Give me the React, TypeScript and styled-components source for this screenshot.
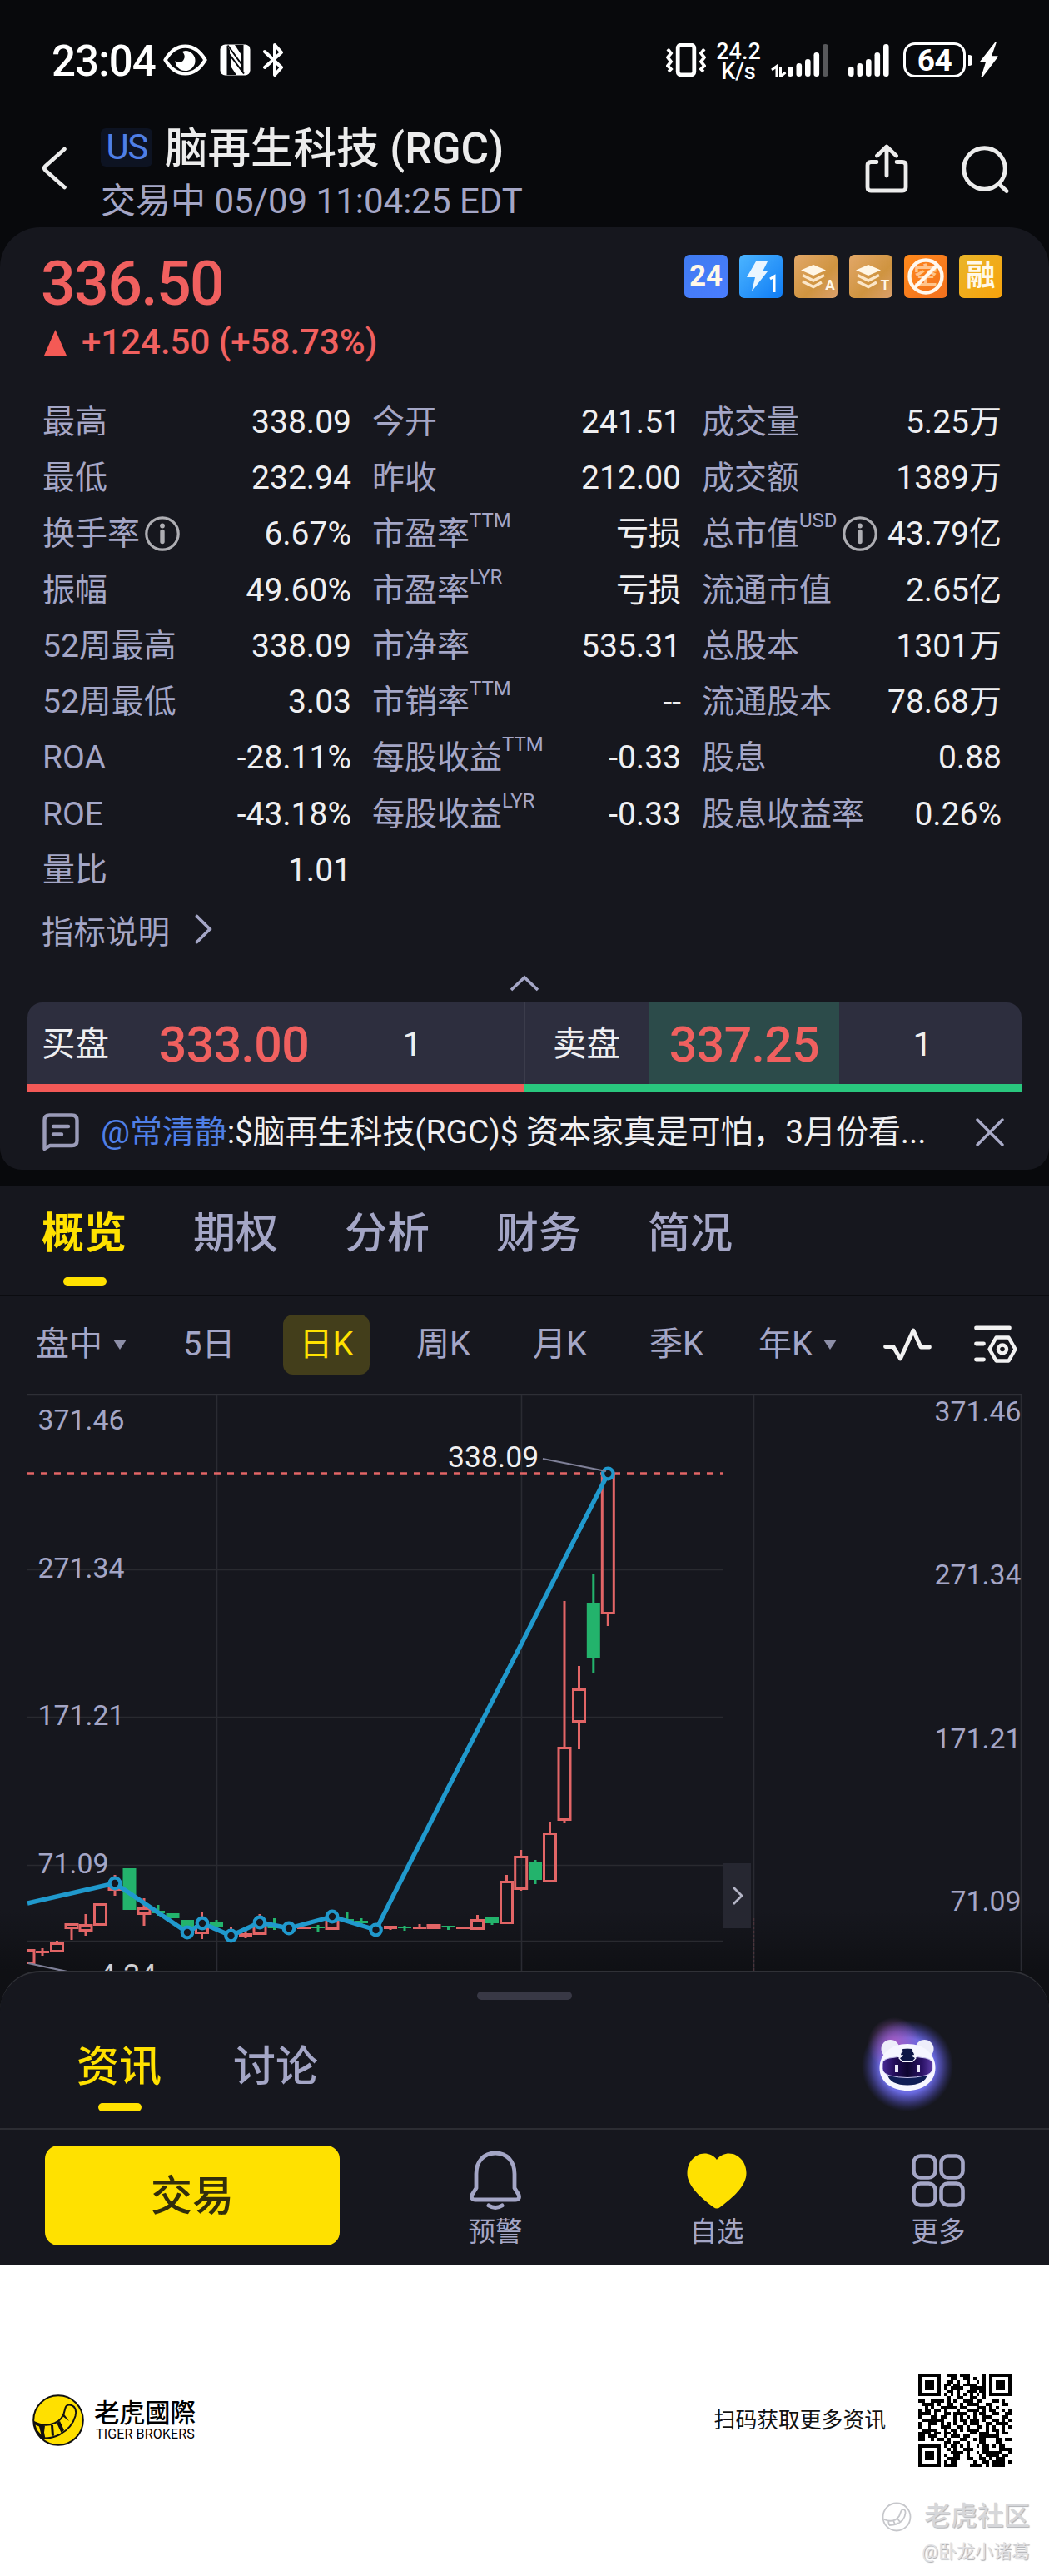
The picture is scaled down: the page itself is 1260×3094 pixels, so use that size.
import React from 'react';
import styled, { createGlobalStyle } from 'styled-components';

const FONT = `Roboto, 'Noto Sans CJK SC', sans-serif`;

const color = {
  page: '#08090c',
  panel: '#16171e',
  muted: '#a4a6c6',
  text: '#efeff1',
  red: '#f0605f',
  green: '#29c77e',
  yellow: '#ffe100',
  blue: '#4f7fe6',
  rule: '#2c2d33',
};

const GlobalStyle = createGlobalStyle`
  * { box-sizing: border-box; }
  body { margin: 0; background: #fff; font-family: ${FONT}; }
  svg { display: block; flex: none; }
  button { font: inherit; border: 0; padding: 0; margin: 0; background: none; color: inherit; }
`;

const Page = styled.div`
  width: 1260px;
  height: 3094px;
  background: #fff;
  overflow: hidden;
  white-space: nowrap;
`;

const Phone = styled.main`
  height: 2720px;
  background: ${color.page};
  display: flex;
  flex-direction: column;
`;

/* ---------- status bar ---------- */

const StatusBar = styled.div`
  height: 144px;
  flex: none;
  display: flex;
  align-items: center;
  padding: 0 60px 0 62px;
  color: #fff;
`;

const Clock = styled.span`
  width: 134px;
  font-size: 51px;
  line-height: 60px;
  font-weight: 500;
  letter-spacing: -0.9px;
  padding-top: 3px;
`;

const StatusLeft = styled.div`
  display: flex;
  align-items: center;
  gap: 15px;
  margin-right: auto;
`;

const StatusRight = styled.div`
  display: flex;
  align-items: center;
`;

const NetSpeed = styled.div`
  display: flex;
  flex-direction: column;
  width: 54px;
  margin: 3px 12px 0 12px;
  font-size: 27px;
  line-height: 24px;
  font-weight: 500;
  text-align: center;
`;

const Battery = styled.div`
  width: 75px;
  height: 42px;
  margin-left: 17px;
  border: 3px solid #fff;
  border-radius: 14px;
  font-size: 37px;
  line-height: 38px;
  font-weight: 700;
  letter-spacing: -0.6px;
  text-align: center;
`;

const BatteryTip = styled.i`
  width: 5px;
  height: 13px;
  margin: 0 8px 0 3px;
  border-radius: 0 4px 4px 0;
  background: #fff;
`;

const SignalGap = styled.i`
  width: 24px;
`;

/* ---------- title bar ---------- */

const TitleBar = styled.header`
  height: 129px;
  flex: none;
  display: flex;
  padding-left: 50px;
`;

const BackIcon = styled.div`
  width: 71px;
  padding-top: 32px;
`;

const Titles = styled.div`
  flex: 1;
`;

const TitleLine = styled.div`
  height: 66px;
  margin-top: 2px;
  display: flex;
  align-items: center;
  gap: 15px;
`;

const Market = styled.span`
  width: 62px;
  height: 46px;
  margin-top: -5px;
  border-radius: 6px;
  background: #0d1322;
  color: ${color.blue};
  font-size: 42px;
  line-height: 45px;
  letter-spacing: -1.5px;
  text-align: center;
`;

const Title = styled.h1`
  margin: 0;
  color: #ececec;
  font-size: 51.5px;
  line-height: 66px;
  font-weight: 500;
`;

const Session = styled.div`
  color: ${color.muted};
  font-size: 42px;
  line-height: 60px;
`;

const HeaderActions = styled.div`
  display: flex;
  gap: 63px;
  padding: 29px 48px 0 0;
`;

/* ---------- quote card ---------- */

const Card = styled.section`
  height: 1132px;
  flex: none;
  background: ${color.panel};
  border-radius: 48px 48px 26px 26px;
  padding-top: 22px;
`;

const PriceRow = styled.div`
  display: flex;
  justify-content: space-between;
  padding: 0 56px 0 49px;
  color: ${color.red};
`;

const Price = styled.div`
  padding-top: 1px;
  font-size: 73.5px;
  line-height: 90px;
  font-weight: 500;
  letter-spacing: -1.7px;
`;

const Change = styled.div`
  display: flex;
  align-items: center;
  gap: 18px;
  padding-left: 4px;
  font-size: 42px;
  line-height: 50px;
  font-weight: 500;
`;

const Badges = styled.div`
  display: flex;
  gap: 14px;
  margin-top: 11px;
`;

const Badge = styled.span<{ $bg: string }>`
  width: 52px;
  height: 52px;
  border-radius: 6px;
  background: ${(p) => p.$bg};
  display: flex;
  align-items: center;
  justify-content: center;
  color: #fff8e8;
  font-size: 35px;
  font-weight: 700;
  line-height: 52px;
`;

const Stats = styled.div`
  display: grid;
  grid-template-columns: 371px 371px 360px;
  column-gap: 25px;
  margin: 37px 0 0 51px;
`;

const StatRow = styled.div`
  height: 67.3px;
  display: flex;
  align-items: center;
  justify-content: space-between;
  font-size: 39px;
  line-height: 60px;
`;

const StatLabel = styled.span`
  display: flex;
  align-items: center;
  color: ${color.muted};
`;

const Sup = styled.span`
  font-size: 24px;
  line-height: 30px;
  margin-top: -32px;
`;

const InfoSlot = styled.span`
  margin-left: 6px;
`;

const StatValue = styled.span`
  color: ${color.text};
`;

const Explain = styled.div`
  height: 75px;
  padding-left: 50px;
  display: flex;
  align-items: center;
  gap: 30px;
  color: ${color.muted};
  font-size: 38.5px;
`;

const Collapse = styled.div`
  height: 50px;
  padding-top: 4px;
  display: flex;
  align-items: center;
  justify-content: center;
`;

const BidAsk = styled.div`
  display: grid;
  grid-template-columns: 1fr 1fr;
  margin: 0 33px;
  border-radius: 18px 18px 0 0;
  overflow: hidden;
  background: #2d2e3e;
`;

const Side = styled.div<{ $bar: string }>`
  height: 108px;
  display: flex;
  border-bottom: 10px solid ${(p) => p.$bar};
  line-height: 101px;
  color: ${color.text};
  & + & { box-shadow: inset 1px 0 #3b3c4b; }
`;

const SideName = styled.span<{ $indent: number; $width: number }>`
  width: ${(p) => p.$width}px;
  padding-left: ${(p) => p.$indent}px;
  font-size: 40.5px;
`;

const SidePrice = styled.span<{ $bg?: string }>`
  width: 228px;
  font-size: 59px;
  font-weight: 500;
  letter-spacing: -0.6px;
  text-align: center;
  color: ${color.red};
  background: ${(p) => p.$bg ?? 'transparent'};
`;

const SideSize = styled.span`
  width: 200px;
  text-align: center;
  font-size: 41px;
`;

const Comment = styled.div`
  height: 93px;
  display: flex;
  align-items: center;
  padding: 4px 54px 0 51px;
  font-size: 39px;
  line-height: 60px;
  color: ${color.text};
`;

const CommentText = styled.div`
  flex: 1;
  margin-left: 26px;
  letter-spacing: -0.1px;
`;

const Mention = styled.span`
  color: ${color.blue};
`;

/* ---------- tabs ---------- */

const TabBar = styled.nav`
  height: 132px;
  flex: none;
  margin-top: 20px;
  padding: 21px 0 0 50px;
  display: flex;
  gap: 79px;
  background: ${color.panel};
  border-bottom: 2px solid #0b0c10;
`;

const Tab = styled.div<{ $active?: boolean; $weight: number }>`
  width: 103px;
  font-size: 51px;
  line-height: 72px;
  font-weight: ${(p) => p.$weight};
  color: ${(p) => (p.$active ? color.yellow : color.muted)};
`;

const Underline = styled.i<{ $top: number }>`
  display: block;
  width: 52px;
  height: 10px;
  margin: ${(p) => p.$top}px auto 0;
  border-radius: 5px;
  background: ${color.yellow};
`;

const Periods = styled.div`
  height: 117px;
  flex: none;
  padding: 0 0 1px 43px;
  display: grid;
  grid-template-columns: 177px 120px 160px 140px 140px 131px 150px 109px 60px;
  align-items: center;
  background: ${color.panel};
  color: ${color.muted};
  font-size: 40px;
  line-height: 72px;
`;

const Period = styled.span`
  display: flex;
  align-items: center;
  gap: 13px;
`;

const ActivePeriod = styled.span`
  width: 104px;
  height: 72px;
  border-radius: 12px;
  background: #433e1b;
  color: ${color.yellow};
  text-align: center;
`;

const Caret = styled.i`
  border: 8.5px solid transparent;
  border-top: 12px solid #8d8fa8;
  border-bottom: 0;
`;

/* ---------- chart ---------- */

const ChartArea = styled.div`
  position: relative;
  height: 693px;
  flex: none;
  background: linear-gradient(${color.panel} 620px, #0f1014 693px);
`;

const ChartToggle = styled.button`
  position: absolute;
  left: 869px;
  top: 564px;
  width: 33px;
  height: 78px;
  display: flex;
  align-items: center;
  justify-content: center;
  background: #262731;
`;

/* ---------- bottom sheet ---------- */

const SheetBackdrop = styled.div`
  height: 189px;
  flex: none;
  background: #0f1014;
`;

const Sheet = styled.section`
  height: 189px;
  background: ${color.panel};
  border-top: 2px solid #303137;
  border-radius: 48px 48px 0 0;
  padding-top: 23px;
`;

const Handle = styled.i`
  display: block;
  width: 114px;
  height: 10px;
  margin: 0 auto;
  border-radius: 5px;
  background: #383845;
`;

const SheetTabs = styled.div`
  display: flex;
  gap: 85px;
  padding: 45px 100px 0 92px;
`;

const Assistant = styled.div`
  margin: -36px 0 0 auto;
  height: 140px;
`;

const BottomBar = styled.footer`
  height: 164px;
  flex: none;
  display: flex;
  background: ${color.panel};
  border-top: 2px solid ${color.rule};
  padding: 19px 0 0 54px;
`;

const TradeButton = styled.button`
  width: 354px;
  height: 120px;
  margin-right: 54px;
  border-radius: 16px;
  background: ${color.yellow};
  color: #322e0c;
  font-size: 50px;
  line-height: 122px;
  font-weight: 500;
`;

const BarItem = styled.div`
  width: 266px;
  display: flex;
  flex-direction: column;
  align-items: center;
  color: ${color.muted};
  font-size: 32.5px;
  line-height: 40px;
`;

const BarIcon = styled.div`
  height: 84px;
  display: flex;
  align-items: center;
`;

/* ---------- share footer ---------- */

const ShareFooter = styled.div`
  height: 374px;
  display: flex;
  flex-direction: column;
`;

const BrandRow = styled.div`
  display: flex;
  align-items: center;
  padding: 131px 45px 0 39px;
`;

const BrandText = styled.div`
  margin-left: 12px;
  color: #000;
`;

const BrandName = styled.div`
  font-family: 'Noto Sans CJK TC', sans-serif;
  font-size: 30.5px;
  line-height: 36px;
  font-weight: 500;
  margin-top: -3px;
`;

const BrandLatin = styled.div`
  font-size: 16px;
  line-height: 18px;
  letter-spacing: 0.15px;
  padding-left: 2px;
  margin-top: 1px;
`;

const ScanHint = styled.div`
  margin: 0 39px 0 auto;
  font-size: 25.8px;
  line-height: 40px;
  color: #111;
`;

const Watermark = styled.div`
  display: flex;
  flex-direction: column;
  align-items: flex-end;
  padding: 38px 23px 0 0;
`;

const WatermarkTop = styled.div`
  display: flex;
  align-items: center;
  gap: 15px;
  color: #d6d7da;
  text-shadow: 1px 1px 1px #b0b2b6;
  font-size: 31.7px;
  line-height: 44px;
  font-weight: 500;
`;

const WatermarkUser = styled.div`
  font-size: 22px;
  line-height: 40px;
  color: #e2e2e5;
  text-shadow: 1px 1px 1px #a9abaf;
`;

/* ---------- icons ---------- */

const EyeIcon = () => (
  <svg width="53" height="38" viewBox="0 0 53 38">
    <path d="M2.5 19C9 8 17 2.6 26.500 2.600S44 8 50.500 19C44 30 36 35.400 26.500 35.400S9 30 2.500 19Z" fill="none" stroke="#fff" strokeWidth="4.400" strokeLinejoin="round" />
    <path d="M27 8a12 12 0 1 1-12.500 12c2.500 2.500 7.500 2.500 9.800-.8C27 15.500 25.500 11 22.500 9.200A12 12 0 0 1 27 8Z" fill="#fff" />
  </svg>
);

const NfcIcon = () => (
  <svg width="37" height="38" viewBox="0 0 37 38">
    <rect x="0.500" y="0.500" width="36" height="37" rx="6" fill="#fff" />
    <path d="M9.500 1.500 26 24V9M12 36V13l17 22.500" fill="none" stroke="#08090c" strokeWidth="2" />
    <path d="M8.500 1.500 12 7v30H8.500ZM28.500 36.500 26 31V1h2.500Z" fill="#08090c" />
    <path d="M12 25l8 12h-8Z" fill="#08090c" />
    <path d="M26 13 18 1h8Z" fill="#08090c" />
  </svg>
);

const BluetoothIcon = () => (
  <svg width="26" height="40" viewBox="0 0 26 40">
    <path d="M2 10 22 29 14 38V2l8 9L2 29" fill="none" stroke="#fff" strokeWidth="4" strokeLinejoin="round" strokeLinecap="round" />
  </svg>
);

const VibrateIcon = () => (
  <svg width="48" height="40" viewBox="0 0 48 40">
    <rect x="14.200" y="2.200" width="19.600" height="35.600" rx="3.500" fill="none" stroke="#fff" strokeWidth="4.800" />
    <path d="M2 7l4 5-4 5 4 5-4 5 4 4-3 3M46 7l-4 5 4 5-4 5 4 5-4 4 3 3" fill="none" stroke="#fff" strokeWidth="3.800" />
  </svg>
);

const SIGNAL_TOPS = [28, 24, 19, 11, 1];

const Signal = ({ dimLast }: { dimLast?: boolean }) => (
  <svg width="49" height="41" viewBox="0 0 49 41">
    {SIGNAL_TOPS.map((top, i) => (
      <rect key={top} x={i * 10.5} y={top} width="6.600" height={40 - top} rx="3.200" fill={dimLast && i === 4 ? '#57585b' : '#fff'} />
    ))}
  </svg>
);

const DataArrows = () => (
  <svg width="20" height="41" viewBox="0 0 20 41">
    <path d="M1 32 7 27.500V40M11.500 28v12l6-5" fill="none" stroke="#fff" strokeWidth="3" />
  </svg>
);

const BoltIcon = () => (
  <svg width="24" height="42" viewBox="0 0 24 42">
    <path d="M20 0 2 23h7L3 42 22 17h-8Z" fill="#fff" stroke="#fff" strokeWidth="1.500" strokeLinejoin="round" />
  </svg>
);

const BackArrow = () => (
  <svg width="32" height="52" viewBox="0 0 32 52">
    <path d="M27.500 3 4.500 23.500q-2.500 2.500 0 5L27.500 49" fill="none" stroke="#ececec" strokeWidth="4.600" strokeLinecap="round" />
  </svg>
);

const ShareIcon = () => (
  <svg width="52" height="60" viewBox="0 0 52 60">
    <path d="M14 21.500H7q-4 0-4 4V52q0 4 4 4h38q4 0 4-4V25.500q0-4-4-4h-7M26 38V4M14.500 14 26 3l11.500 11" fill="none" stroke="#ececec" strokeWidth="4.800" strokeLinecap="round" strokeLinejoin="round" />
  </svg>
);

const SearchIcon = () => (
  <svg width="58" height="60" viewBox="0 0 58 60">
    <circle cx="28.500" cy="29.500" r="24.800" fill="none" stroke="#ececec" strokeWidth="5" />
    <path d="M46 48l9 8.500" stroke="#ececec" strokeWidth="5" strokeLinecap="round" />
  </svg>
);

const FlashBadge = () => (
  <svg width="52" height="52" viewBox="0 0 52 52">
    <path d="M20 8h14l-6 12h6L15 44l4-17H9Z" fill="#eaf6ff" />
    <path d="M37 29l5-3v19" fill="none" stroke="#fff" strokeWidth="3" />
  </svg>
);

const LayersBadge = ({ letter }: { letter: string }) => (
  <svg width="52" height="52" viewBox="0 0 52 52">
    <path d="M23 12l15 6.500L23 25 8 18.500Z" fill="#fff6e6" />
    <path d="M10 24.500 23 31l13-6.500M10 32l13 6.500L33 33" fill="none" stroke="#fbe6c8" strokeWidth="3.600" />
    <text x="43" y="42" fontSize="17" fontWeight="700" textAnchor="middle" fill="#fff6e6">{letter}</text>
  </svg>
);

const NoShortBadge = () => (
  <svg width="52" height="52" viewBox="0 0 52 52">
    <text x="26" y="36" fontSize="29" fontWeight="700" textAnchor="middle" fill="#ffc48c">空</text>
    <circle cx="26" cy="26" r="19.500" fill="none" stroke="#fff8ee" strokeWidth="4.400" />
    <path d="M12.500 39.500 39.500 12.500" stroke="#fff8ee" strokeWidth="4.400" />
  </svg>
);

const InfoIcon = () => (
  <svg width="42" height="42" viewBox="0 0 42 42">
    <circle cx="21" cy="21" r="19.200" fill="none" stroke="#aeaeb3" strokeWidth="3.200" />
    <circle cx="21" cy="11.500" r="2.900" fill="#aeaeb3" />
    <path d="M21 18.500v12" stroke="#aeaeb3" strokeWidth="5.400" strokeLinecap="round" />
  </svg>
);

const CommentIcon = () => (
  <svg width="44" height="46" viewBox="0 0 44 46">
    <path d="M2.500 43V8.500q0-6 6-6h27q6 0 6 6V33q0 6-6 6H9ZM13 16h18M13 25.500h10" fill="none" stroke="#9a9bb8" strokeWidth="4.400" strokeLinecap="round" strokeLinejoin="round" />
  </svg>
);

const CloseIcon = () => (
  <svg width="34" height="34" viewBox="0 0 34 34">
    <path d="M2 2l30 30M32 2 2 32" stroke="#a9abc8" strokeWidth="3.400" strokeLinecap="round" />
  </svg>
);

const PulseIcon = () => (
  <svg width="58" height="42" viewBox="0 0 58 42">
    <path d="M2.500 23.500H12L20.500 38 36 4l9 20h10.500" fill="none" stroke="#f2f2f2" strokeWidth="4.800" strokeLinecap="round" strokeLinejoin="round" />
  </svg>
);

const ChartSettingsIcon = () => (
  <svg width="52" height="48" viewBox="0 0 52 48">
    <path d="M2.500 4h40M2.500 23h9M2.500 42h9" fill="none" stroke="#f2f2f2" strokeWidth="4.800" strokeLinecap="round" />
    <path d="M26.500 15.500h15l8 14-8 14h-15l-8-14Z" fill="none" stroke="#f2f2f2" strokeWidth="4.400" strokeLinejoin="round" />
    <circle cx="34" cy="29.500" r="5" fill="none" stroke="#f2f2f2" strokeWidth="4.400" />
  </svg>
);

const AssistantIcon = () => (
  <svg width="140" height="140" viewBox="0 0 140 140">
    <defs>
      <radialGradient id="aura">
        <stop offset="0.600" stopColor="#6a6ae0" />
        <stop offset="0.760" stopColor="#5552bd" stopOpacity="0.700" />
        <stop offset="1" stopColor="#3a3a90" stopOpacity="0" />
      </radialGradient>
      <radialGradient id="auraPink">
        <stop offset="0" stopColor="#a85cc4" />
        <stop offset="1" stopColor="#a85cc4" stopOpacity="0" />
      </radialGradient>
      <linearGradient id="visor">
        <stop offset="0" stopColor="#472a94" />
        <stop offset="0.250" stopColor="#220c58" />
        <stop offset="0.500" stopColor="#0d0530" />
        <stop offset="0.800" stopColor="#2c1368" />
        <stop offset="1" stopColor="#5a3aa4" />
      </linearGradient>
    </defs>
    <circle cx="70" cy="70" r="55" fill="url(#aura)" />
    <circle cx="54" cy="44" r="32" fill="url(#auraPink)" />
    <circle cx="49.500" cy="50" r="11" fill="#eeeefa" />
    <circle cx="90.500" cy="50" r="11" fill="#eeeefa" />
    <path d="M70 44c20 0 33.500 12 33.500 29S88 100 70 100 36.500 90 36.500 73 50 44 70 44Z" fill="#f6f6ff" />
    <path d="M46 80h48c-1 9-11 13.500-24 13.500S47 89 46 80Z" fill="#101d55" />
    <path d="M40 68q0-5 8-7 22-4 44 0 8 2 8 7v6q-1 6-9 8-21 5-42 0-8-2-9-8Z" fill="url(#visor)" stroke="#c9c4ee" strokeWidth="1" />
    <path d="M60 61l4 4.500h12l4-4.500-4-12H64Z" fill="#0d1646" stroke="#f6f6ff" strokeWidth="1.200" />
    <path d="M56 51l9 1.500-3 1.500ZM84 51l-9 1.500 3 1.500ZM55 57l10 1-4 2.500ZM85 57l-10 1 4 2.500ZM58 47h24l-6 2.500q-6-1.500-12 0Z" fill="#f6f6ff" stroke="#f6f6ff" strokeWidth="1" />
    <path d="M57 69v9M83 69v9" stroke="#e9e7f7" strokeWidth="4" />
  </svg>
);

const BellIcon = () => (
  <svg width="64" height="72" viewBox="0 0 64 72">
    <path d="M32 3C18 3 9 13 9 28v17L4 53q-2 6 4 6h48q6 0 4-6l-5-8V28C55 13 46 3 32 3Z" fill="none" stroke={color.muted} strokeWidth="4.800" strokeLinejoin="round" />
    <path d="M24 66q8 5 16 0" fill="none" stroke={color.muted} strokeWidth="5" strokeLinecap="round" />
  </svg>
);

const HeartIcon = () => (
  <svg width="72" height="67" viewBox="0 0 72 67">
    <path d="M36 8C42 0 52-1 59 2.500 69 7.500 73 19 71 29 68 43 52 56 40 65q-4 3-8 0C20 56 4 43 1 29-1 19 3 7.500 13 2.500 20-1 30 0 36 8Z" fill={color.yellow} />
  </svg>
);

const MoreIcon = () => (
  <svg width="64" height="64" viewBox="0 0 64 64">
    {[2.5, 35.5].map((x) =>
      [2.5, 35.5].map((y) => (
        <rect key={`${x}-${y}`} x={x} y={y} width="26" height="26" rx="8" fill="none" stroke={color.muted} strokeWidth="4.600" />
      )),
    )}
  </svg>
);

const TigerLogo = () => (
  <svg width="62" height="62" viewBox="0 0 62 62">
    <circle cx="31" cy="31" r="29.800" fill="#ffe000" stroke="#111" strokeWidth="2" />
    <path d="M1.500 33c8 4 17 5 25 1.500C35 31 38 24 39 18c1-6 5-6 8-5 5 2 6 7 4.500 13C49 35 42 43 33 48c-8 4-15 5-22 4.500" fill="none" stroke="#111" strokeWidth="2" />
    <path d="M1 32l8 4 6 1.500-1 8 1.500 7.500-5-.5C6 48 2 41 1 32Z" fill="#111" />
    <path d="M8.500 38l2 11L6 44 4 36.500ZM22 37l3 0 1 12.500-3 .5ZM29 34l4-2 5 11-3.500 3ZM36 26l1.500-3 6.500 9Z" fill="#111" />
    <path d="M8 38.500l2.500 10-5-6-2-6Z" fill="#ffe000" />
  </svg>
);

const QR_ROWS = [
  '#######..###.###....#.#######',
  '#.....#...##..##.#..#.#.....#',
  '#.###.#..##.#..#..#.#.#.###.#',
  '#.###.#.##.##.####..#.#.###.#',
  '#.###.#.#.####..#####.#.###.#',
  '#.....#..##.#..###.##.#.....#',
  '#######.#.#.#.#.#.#.#.#######',
  '.........#..##..##..#........',
  '##..####.#.#..###.##...##.#..',
  '.####.#..##..#.####..##...##.',
  '..#.#..#####.##...###.#.#....',
  '#.##.##.#...#..####.#.##..#.#',
  '####.#..##.####..#.##..##..##',
  '#...##.##..#.#.#.#..###...##.',
  '.#######...#.##.###.#..##.#.#',
  '#..###.#.#.#..#.###..##.####.',
  '#..#...###..##.#..##.#.#..#.#',
  '.#####..#.##.#.####..#.##.#..',
  '####.##.##.#....##.###..#.##.',
  '##.###..#.###.##...######....',
  '##..#.##.#...##..#.##...##.##',
  '........##.##..#...##...##...',
  '#######.#.##.#.#..#.##.#.##..',
  '#.....#..#.#..###...##...####',
  '#.###.#...####.#..#.######..#',
  '#.###.#.#..##..#...#.####.##.',
  '#.###.#..####..##..##.#.###..',
  '#.....#.#.##.....#..##.####.#',
  '#######.####....####.#.####..',
];

const QrCode = () => (
  <svg width="112" height="112" viewBox="0 0 29 29" shapeRendering="crispEdges">
    {QR_ROWS.map((row, y) =>
      row.split('').map((cell, x) => (cell === '#' ? <rect key={`${x}-${y}`} x={x} y={y} width="1" height="1" fill="#000" /> : null)),
    )}
  </svg>
);

const WatermarkLogo = () => (
  <svg width="36" height="36" viewBox="0 0 36 36">
    <circle cx="18" cy="18" r="16.500" fill="none" stroke="#c6c7cb" strokeWidth="1.800" />
    <path d="M3 21q12 5 18-4c2-4 2-8 5-8 4 0 3 8-1 13-4 4-9 6-16 6M8 23l1 5M14 22l2 5M19 20l3 4" fill="none" stroke="#c6c7cb" strokeWidth="1.800" />
  </svg>
);

/* ---------- data ---------- */

interface Stat {
  label: string;
  value: string;
  sup?: string;
  info?: boolean;
}

const STATS: Stat[][] = [
  [
    { label: '最高', value: '338.09' },
    { label: '最低', value: '232.94' },
    { label: '换手率', value: '6.67%', info: true },
    { label: '振幅', value: '49.60%' },
    { label: '52周最高', value: '338.09' },
    { label: '52周最低', value: '3.03' },
    { label: 'ROA', value: '-28.11%' },
    { label: 'ROE', value: '-43.18%' },
    { label: '量比', value: '1.01' },
  ],
  [
    { label: '今开', value: '241.51' },
    { label: '昨收', value: '212.00' },
    { label: '市盈率', sup: 'TTM', value: '亏损' },
    { label: '市盈率', sup: 'LYR', value: '亏损' },
    { label: '市净率', value: '535.31' },
    { label: '市销率', sup: 'TTM', value: '--' },
    { label: '每股收益', sup: 'TTM', value: '-0.33' },
    { label: '每股收益', sup: 'LYR', value: '-0.33' },
  ],
  [
    { label: '成交量', value: '5.25万' },
    { label: '成交额', value: '1389万' },
    { label: '总市值', sup: 'USD', value: '43.79亿', info: true },
    { label: '流通市值', value: '2.65亿' },
    { label: '总股本', value: '1301万' },
    { label: '流通股本', value: '78.68万' },
    { label: '股息', value: '0.88' },
    { label: '股息收益率', value: '0.26%' },
  ],
];

/* x, body top, body bottom, wick top, wick bottom, rising */
type Candle = [number, number, number, number, number, boolean];

const CANDLES: Candle[] = [
  [34, 2341, 2359, 2341, 2359, true],
  [51, 2343, 2346, 2340, 2349, true],
  [68.5, 2333, 2345, 2331, 2345, true],
  [86, 2310, 2317, 2310, 2330, true],
  [103, 2311, 2320, 2299, 2325, true],
  [120.5, 2286, 2313, 2286, 2313, true],
  [138, 2264, 2271, 2252, 2277, true],
  [155.5, 2244, 2294, 2244, 2294, false],
  [173, 2291, 2300, 2280, 2313, true],
  [190, 2295, 2298, 2288, 2301, false],
  [207.5, 2298, 2304, 2298, 2304, false],
  [225, 2306, 2314, 2306, 2314, false],
  [242.5, 2312, 2323, 2296, 2329, true],
  [260, 2308, 2314, 2306, 2314, false],
  [277.5, 2321, 2324, 2315, 2325, true],
  [295, 2322, 2326, 2319, 2328, true],
  [312, 2311, 2324, 2299, 2324, true],
  [329.5, 2313, 2316, 2304, 2318, false],
  [347, 2314, 2318, 2312, 2319, false],
  [365, 2314, 2317, 2314, 2317, true],
  [382, 2314, 2316, 2312, 2321, false],
  [399, 2306, 2318, 2300, 2318, true],
  [417, 2305, 2307, 2297, 2308, false],
  [434, 2307, 2310, 2304, 2311, false],
  [469, 2313, 2317, 2313, 2318, true],
  [486, 2314, 2316, 2313, 2319, false],
  [504, 2314, 2317, 2311, 2317, true],
  [521, 2311, 2317, 2311, 2317, true],
  [538.5, 2313, 2315, 2313, 2318, false],
  [556, 2314, 2317, 2314, 2317, true],
  [573.5, 2305, 2318, 2300, 2318, true],
  [591, 2303, 2310, 2303, 2312, false],
  [608.5, 2259, 2311, 2252, 2311, true],
  [625.7, 2229, 2270, 2222, 2271, true],
  [643, 2236, 2258, 2234, 2263, false],
  [660.5, 2201, 2261, 2188, 2261, true],
  [678, 2098, 2187, 1923, 2190, true],
  [695.5, 2028, 2069, 2001, 2101, true],
  [712.8, 1925, 1991, 1890, 2010, false],
  [730.3, 1770, 1939, 1770, 1953, true],
];

const TREND: [number, number][] = [
  [33, 2286], [138, 2262], [225, 2321], [243, 2310], [277.5, 2325],
  [312, 2309], [347, 2316], [399, 2302], [451.5, 2318], [730.3, 1770],
];

const CHART_RED = '#e26566';
const CHART_GREEN = '#23b36c';

const LEFT_AXIS: [string, number][] = [['371.46', 1705], ['271.34', 1883], ['171.21', 2060], ['71.09', 2238]];
const RIGHT_AXIS: [string, number][] = [['371.46', 1695], ['271.34', 1891], ['171.21', 2087.5], ['71.09', 2283]];

const CandleMark = ({ candle: [x, top, bottom, high, low, rising] }: { candle: Candle }) => {
  const ink = rising ? CHART_RED : CHART_GREEN;
  const hollow = rising && bottom - top > 5;
  return (
    <g stroke={ink} strokeWidth="3">
      {high < top && <path d={`M${x} ${high}V${top}`} />}
      {low > bottom && <path d={`M${x} ${bottom}V${low}`} />}
      {hollow ? (
        <rect x={x - 7} y={top + 1.5} width="14" height={bottom - top - 3} fill="none" />
      ) : (
        <rect x={x - 8} y={top} width="16" height={bottom - top} fill={ink} stroke="none" />
      )}
    </g>
  );
};

const PriceChart = () => (
  <svg width="1260" height="693" viewBox="0 1674 1260 693" fontFamily={FONT}>
    <defs>
      <clipPath id="plot"><rect x="33" y="1674" width="840" height="693" /></clipPath>
    </defs>
    <path d="M33 1675H1227" stroke="#2e2f36" strokeWidth="2.400" />
    <path d="M260.500 1675V2367M626.500 1675V2367M905.500 1675V2367M1226.500 1675V2367" stroke="#2a2b32" strokeWidth="1.600" />
    <path d="M33 1885.500H869M33 2062.500H869M33 2240.500H869M33 2331.500H869" stroke="#292a30" strokeWidth="1.600" />
    <path d="M905.500 2304V2367" stroke="#4a343b" strokeWidth="1.400" strokeDasharray="3 2" />
    <g clipPath="url(#plot)">
      <path d="M33 1770H869" stroke={CHART_RED} strokeWidth="3.400" strokeDasharray="8 8" />
      {CANDLES.map((c) => <CandleMark key={c[0]} candle={c} />)}
      <polyline points={TREND.map((p) => p.join(',')).join(' ')} fill="none" stroke="#2099cd" strokeWidth="5.400" strokeLinejoin="round" />
      {TREND.slice(1).map(([x, y]) => (
        <circle key={x} cx={x} cy={y} r="6.300" fill={color.panel} stroke="#2099cd" strokeWidth="4.200" />
      ))}
      <path d="M652 1752 728 1767M34 2358 90 2370" stroke="#7f8098" strokeWidth="2.200" />
    </g>
    <g fill={color.muted} fontSize="33.800">
      {LEFT_AXIS.map(([t, y]) => <text key={t} x="45.500" y={y + 12.2}>{t}</text>)}
      {RIGHT_AXIS.map(([t, y]) => <text key={t} x="1226.500" y={y + 12.2} textAnchor="end">{t}</text>)}
    </g>
    <g fill={color.text} fontSize="35.500">
      <text x="538" y="1761.500">338.09</text>
      <text x="119" y="2384" fill="#cfcfd2">4.24</text>
    </g>
  </svg>
);

const TABS = ['概览', '期权', '分析', '财务', '简况'];

export default function App() {
  return (
    <Page>
      <GlobalStyle />
      <Phone>
        <StatusBar>
          <Clock>23:04</Clock>
          <StatusLeft>
            <EyeIcon />
            <NfcIcon />
            <BluetoothIcon />
          </StatusLeft>
          <StatusRight>
            <VibrateIcon />
            <NetSpeed><span>24.2</span><span>K/s</span></NetSpeed>
            <DataArrows />
            <Signal dimLast />
            <SignalGap />
            <Signal />
            <Battery>64</Battery>
            <BatteryTip />
            <BoltIcon />
          </StatusRight>
        </StatusBar>

        <TitleBar>
          <BackIcon><BackArrow /></BackIcon>
          <Titles>
            <TitleLine>
              <Market>US</Market>
              <Title>脑再生科技 (RGC)</Title>
            </TitleLine>
            <Session>交易中 05/09 11:04:25 EDT</Session>
          </Titles>
          <HeaderActions>
            <ShareIcon />
            <SearchIcon />
          </HeaderActions>
        </TitleBar>

        <Card>
          <PriceRow>
            <div>
              <Price>336.50</Price>
              <Change>
                <svg width="27" height="31" viewBox="0 0 27 31"><path d="M13.500 0 27 31H0Z" fill="#f45a55" /></svg>
                +124.50 (+58.73%)
              </Change>
            </div>
            <Badges>
              <Badge $bg="linear-gradient(150deg,#3f7bf0,#4a7dff)">24</Badge>
              <Badge $bg="linear-gradient(135deg,#4bb4ff,#0f7cf5)"><FlashBadge /></Badge>
              <Badge $bg="linear-gradient(135deg,#e2a768,#cf9440 60%,#dba06c)"><LayersBadge letter="A" /></Badge>
              <Badge $bg="linear-gradient(135deg,#e2a768,#cf9440 60%,#dba06c)"><LayersBadge letter="T" /></Badge>
              <Badge $bg="linear-gradient(135deg,#ff8a1c,#f2701e)"><NoShortBadge /></Badge>
              <Badge $bg="linear-gradient(135deg,#e9b52a,#f8a30c)">融</Badge>
            </Badges>
          </PriceRow>

          <Stats>
            {STATS.map((column, i) => (
              <div key={i}>
                {column.map((s) => (
                  <StatRow key={s.label + (s.sup ?? '')}>
                    <StatLabel>
                      {s.label}
                      {s.sup && <Sup>{s.sup}</Sup>}
                      {s.info && <InfoSlot><InfoIcon /></InfoSlot>}
                    </StatLabel>
                    <StatValue>{s.value}</StatValue>
                  </StatRow>
                ))}
              </div>
            ))}
          </Stats>

          <Explain>
            指标说明
            <svg width="22" height="36" viewBox="0 0 22 36"><path d="M2.500 2.500 18 18 2.500 33.500" fill="none" stroke={color.muted} strokeWidth="3.800" strokeLinecap="round" /></svg>
          </Explain>
          <Collapse>
            <svg width="36" height="20" viewBox="0 0 36 20"><path d="M2 18 18 3l16 15" fill="none" stroke={color.muted} strokeWidth="3.600" /></svg>
          </Collapse>

          <BidAsk>
            <Side $bar="#f35957">
              <SideName $indent={17} $width={134}>买盘</SideName>
              <SidePrice>333.00</SidePrice>
              <SideSize>1</SideSize>
            </Side>
            <Side $bar={color.green}>
              <SideName $indent={34} $width={150}>卖盘</SideName>
              <SidePrice $bg="#2c4b4a">337.25</SidePrice>
              <SideSize>1</SideSize>
            </Side>
          </BidAsk>

          <Comment>
            <CommentIcon />
            <CommentText><Mention>@常清静</Mention>:$脑再生科技(RGC)$ 资本家真是可怕，3月份看...</CommentText>
            <CloseIcon />
          </Comment>
        </Card>

        <TabBar>
          {TABS.map((name, i) => (
            <Tab key={name} $active={i === 0} $weight={i === 0 ? 700 : 500}>
              {name}
              {i === 0 && <Underline $top={16} />}
            </Tab>
          ))}
        </TabBar>

        <Periods>
          <Period>盘中<Caret /></Period>
          <Period>5日</Period>
          <ActivePeriod>日K</ActivePeriod>
          <Period>周K</Period>
          <Period>月K</Period>
          <Period>季K</Period>
          <Period>年K<Caret /></Period>
          <PulseIcon />
          <ChartSettingsIcon />
        </Periods>

        <ChartArea>
          <PriceChart />
          <ChartToggle>
            <svg width="14" height="24" viewBox="0 0 14 24"><path d="M2 2l10 10L2 22" fill="none" stroke="#b4b5c6" strokeWidth="2.800" /></svg>
          </ChartToggle>
        </ChartArea>

        <SheetBackdrop>
          <Sheet>
            <Handle />
            <SheetTabs>
              <Tab $active $weight={500}>资讯<Underline $top={7} /></Tab>
              <Tab $weight={500}>讨论</Tab>
              <Assistant><AssistantIcon /></Assistant>
            </SheetTabs>
          </Sheet>
        </SheetBackdrop>

        <BottomBar>
          <TradeButton>交易</TradeButton>
          <BarItem><BarIcon><BellIcon /></BarIcon>预警</BarItem>
          <BarItem><BarIcon><HeartIcon /></BarIcon>自选</BarItem>
          <BarItem><BarIcon><MoreIcon /></BarIcon>更多</BarItem>
        </BottomBar>
      </Phone>

      <ShareFooter>
        <BrandRow>
          <TigerLogo />
          <BrandText>
            <BrandName>老虎國際</BrandName>
            <BrandLatin>TIGER BROKERS</BrandLatin>
          </BrandText>
          <ScanHint>扫码获取更多资讯</ScanHint>
          <QrCode />
        </BrandRow>
        <Watermark>
          <WatermarkTop><WatermarkLogo />老虎社区</WatermarkTop>
          <WatermarkUser>@卧龙小诸葛</WatermarkUser>
        </Watermark>
      </ShareFooter>
    </Page>
  );
}
